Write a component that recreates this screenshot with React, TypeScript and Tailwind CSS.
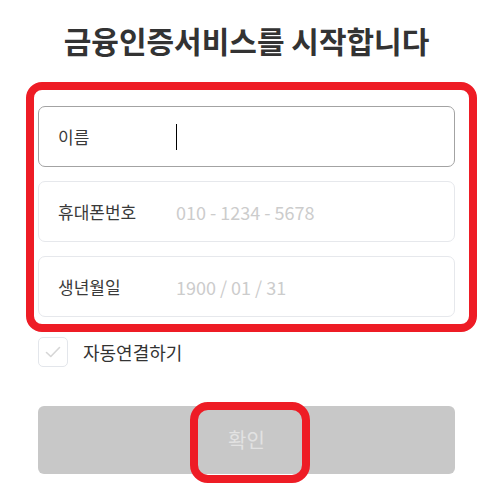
import React from "react";

const font = { fontFamily: '"Noto Sans CJK KR", "Noto Sans", sans-serif' };

function Field({ label, placeholder, active }: { label: string; placeholder?: string; active?: boolean }) {
  return (
    <div
      className={`flex h-[61px] items-center rounded-[7px] border pl-[19px] ${
        active ? "border-[#a3a3a3]" : "border-[#e6e8ec]"
      }`}
    >
      <span className="w-[118px] text-[17px] leading-none text-[#3a3a3a]">{label}</span>
      {active ? (
        <div className="h-[26px] w-px bg-black" />
      ) : (
        <span className="text-[18px] leading-none text-[#cccccc]">{placeholder}</span>
      )}
    </div>
  );
}

export default function App() {
  return (
    <div className="relative h-[502px] w-[493px] overflow-hidden bg-white px-[38px]" style={font}>
      <h1 className="pt-[22px] text-center text-[30px] font-bold leading-[36px] text-[#333333]">
        금융인증서비스를 시작합니다
      </h1>
      <div className="mt-[48px] flex flex-col gap-[14px]">
        <Field label="이름" active />
        <Field label="휴대폰번호" placeholder="010 - 1234 - 5678" />
        <Field label="생년월일" placeholder="1900 / 01 / 31" />
      </div>
      <div className="mt-[20px] flex items-center gap-[15px]">
        <div className="flex h-[30px] w-[30px] items-center justify-center rounded-[5px] border border-[#e3e6eb]">
          <svg width="16" height="12" viewBox="0 0 16 12" fill="none">
            <path d="M1.5 6.5 L5.8 10.5 L14.5 1.5" stroke="#d6d6d6" strokeWidth="1.6" strokeLinecap="round" strokeLinejoin="round" />
          </svg>
        </div>
        <span className="text-[18px] leading-none text-[#333333]">자동연결하기</span>
      </div>
      <button className="mt-[39px] flex h-[68px] w-full items-center justify-center rounded-[6px] bg-[#c8c8c8] text-[20px] text-[#e2e2e2]">
        확인
      </button>

      <div className="pointer-events-none absolute left-[26px] top-[82px] h-[250px] w-[451px] rounded-[16px] border-[8px] border-[#ee1c25]" />
      <div className="pointer-events-none absolute left-[190px] top-[402px] h-[81px] w-[120px] rounded-[18px] border-[8px] border-[#ee1c25]" />
    </div>
  );
}
